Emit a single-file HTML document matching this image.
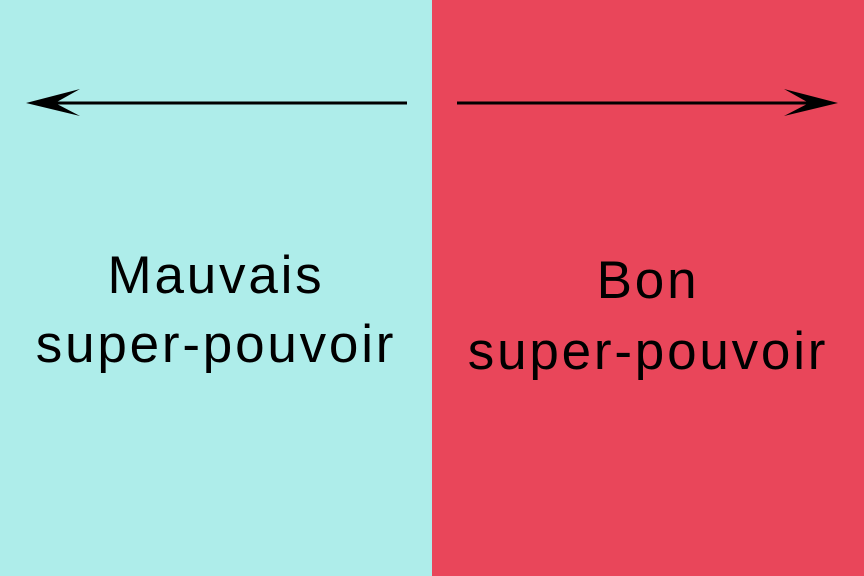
<!DOCTYPE html>
<html><head><style>
body{margin:0;width:864px;height:576px;position:relative;overflow:hidden;font-family:"Liberation Sans",sans-serif;}
.l{position:absolute;left:0;top:0;width:432px;height:576px;background:#aeedea;}
.r{position:absolute;left:432px;top:0;width:432px;height:576px;background:#e9465a;}
.t{position:absolute;width:432px;text-align:center;font-size:53px;letter-spacing:2.8px;color:#000;white-space:nowrap;}
</style></head><body>
<div class="l"></div><div class="r"></div>
<svg width="864" height="576" style="position:absolute;left:0;top:0">
<rect x="50" y="101.5" width="357" height="3" fill="#000"/>
<polygon points="26,103 80,89 55,103 80,116" fill="#000"/>
<rect x="457" y="101.5" width="357" height="3" fill="#000"/>
<polygon points="838,103 784,89 809,103 784,116" fill="#000"/>
</svg>
<div class="t" style="left:0;top:245px">Mauvais</div>
<div class="t" style="left:0;top:314px">super-pouvoir</div>
<div class="t" style="left:432px;top:250px">Bon</div>
<div class="t" style="left:432px;top:321px">super-pouvoir</div>
</body></html>
